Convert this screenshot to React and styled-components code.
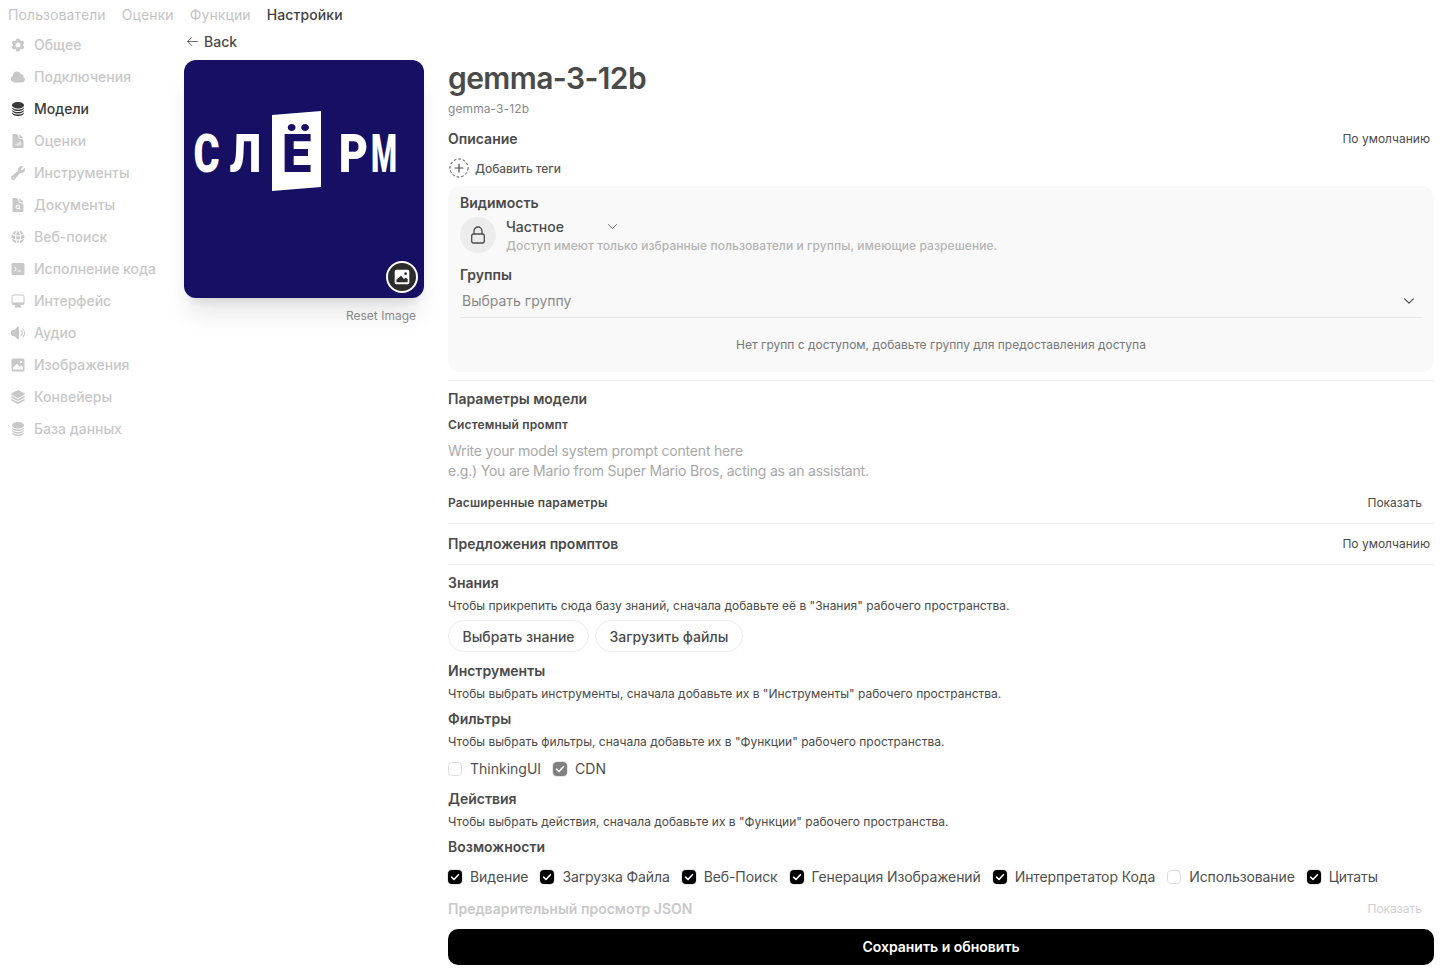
import React from 'react';
import styled, {createGlobalStyle} from 'styled-components';
import {
    HiCog6Tooth, HiCloud, HiCircleStack, HiDocumentChartBar, HiWrench, HiDocumentMagnifyingGlass,
    HiGlobeAlt, HiComputerDesktop, HiSpeakerWave, HiSquare3Stack3D,
    HiOutlineArrowLeft, HiOutlineChevronDown,
} from 'react-icons/hi2';

const GlobalStyle = createGlobalStyle`
    html, body {
        margin: 0;
        background: #fff;
    }
    body {
        font-family: Inter, "Noto Sans", sans-serif;
        color: #4a4a4a;
        -webkit-font-smoothing: antialiased;
    }
    * {
        box-sizing: border-box;
    }
`;

const Page = styled.div`
    width: 1452px;
    height: 976px;
    overflow: hidden;
    padding: 0 18px 0 8px;
`;

const Tabs = styled.nav`
    display: flex;
    gap: 16px;
    height: 29px;
    padding-bottom: 1px;
    align-items: center;
    font-size: 14px;
    letter-spacing: 0.1px;
`;

const Tab = styled.span`
    color: ${p => p.$active ? '#3f3f3f' : '#c4c4c4'};
    font-weight: ${p => p.$active ? 500 : 400};
`;

const Body = styled.div`
    display: flex;
`;

const Sidebar = styled.aside`
    width: 176px;
    flex: none;
`;

const SideItem = styled.div`
    display: flex;
    align-items: center;
    gap: 8px;
    height: 32px;
    padding: 0 0 1px 2px;
    font-size: 14px;
    font-weight: 500;
    color: ${p => p.$active ? '#3a3a3a' : '#c8c8c8'};
    & svg {
        width: 16px;
        height: 16px;
    }
`;

const Main = styled.main`
    flex: 1;
    min-width: 0;
`;

const BackLink = styled.div`
    display: flex;
    align-items: center;
    gap: 5px;
    height: 24px;
    padding-left: 2px;
    font-size: 14px;
    font-weight: 500;
    color: #4a4a4a;
    & svg {
        width: 13px;
        height: 13px;
    }
`;

const Columns = styled.div`
    display: flex;
    gap: 24px;
    margin-top: 7px;
`;

const LeftCol = styled.div`
    width: 240px;
    flex: none;
`;

const Avatar = styled.div`
    position: relative;
    width: 240px;
    height: 238px;
    border-radius: 12px;
    background: #170f63;
    box-shadow: 0 20px 25px -5px rgba(0, 0, 0, 0.1), 0 8px 10px -6px rgba(0, 0, 0, 0.1);
    padding: 51px 0 0 10px;
`;

const Logo = styled.div`
    display: flex;
    align-items: flex-start;
    height: 80px;
`;

const Letter = styled.span`
    display: flex;
    justify-content: center;
    width: ${p => p.$w}px;
    margin-right: ${p => p.$mr || 0}px;
    font-family: Roboto, sans-serif;
    font-weight: 900;
    font-size: 53px;
    line-height: 86px;
    color: ${p => p.$dark ? '#170f63' : '#fff'};
    transform: scaleX(${p => p.$sx || 0.75});
`;

const Door = styled.span`
    display: flex;
    justify-content: center;
    width: 49px;
    height: 80px;
    margin-right: 20px;
    background: #fff;
    clip-path: polygon(0 5%, 100% 0, 100% 95%, 0 100%);
`;

const AvatarButton = styled.div`
    position: absolute;
    right: 6px;
    bottom: 5px;
    width: 32px;
    height: 32px;
    border-radius: 50%;
    border: 2px solid #fff;
    background: #2c2c2c;
    display: flex;
    align-items: center;
    justify-content: center;
    color: #fff;
`;

const ResetLink = styled.div`
    margin-top: 10px;
    padding-right: 8px;
    text-align: right;
    font-size: 12px;
    line-height: 16px;
    color: #8f8f8f;
`;

const RightCol = styled.div`
    flex: 1;
    min-width: 0;
`;

const Title = styled.h1`
    margin: 0;
    font-size: 30px;
    line-height: 36px;
    font-weight: 600;
    letter-spacing: -0.6px;
    color: #4a4a4a;
`;

const SubTitle = styled.div`
    margin-top: 3px;
    font-size: 12px;
    line-height: 20px;
    letter-spacing: 0.1px;
    color: #8a8a8a;
`;

const Row = styled.div`
    display: flex;
    align-items: center;
    justify-content: space-between;
    margin-top: ${p => p.$mt || 0}px;
    height: 20px;
`;

const Heading = styled.div`
    font-size: 14px;
    line-height: 20px;
    font-weight: 600;
    color: ${p => p.$dim ? '#c9c9c9' : '#4a4a4a'};
    margin-top: ${p => p.$mt || 0}px;
`;

const SmallHeading = styled.div`
    font-size: 12px;
    line-height: 16px;
    font-weight: 600;
    letter-spacing: 0.16px;
    color: #4a4a4a;
    margin-top: ${p => p.$mt || 0}px;
`;

const SideNote = styled.span`
    font-size: 12px;
    padding-bottom: 1px;
    color: ${p => p.$dim ? '#cfcfcf' : '#4a4a4a'};
    padding-right: ${p => p.$pr || 4}px;
`;

const TagRow = styled.div`
    display: flex;
    align-items: center;
    gap: 6px;
    height: 20px;
    margin-top: 9px;
    padding-left: 1px;
    font-size: 12px;
    font-weight: 500;
    letter-spacing: -0.05px;
    color: #5a5a5a;
`;

const Panel = styled.section`
    margin-top: 8px;
    height: 186px;
    padding: 7px 12px 0;
    border-radius: 12px;
    background: #f9f9f9;
`;

const VisibilityRow = styled.div`
    display: flex;
    gap: 10px;
    margin-top: 4px;
`;

const LockCircle = styled.div`
    width: 36px;
    height: 36px;
    border-radius: 50%;
    background: #ececec;
    display: flex;
    align-items: center;
    justify-content: center;
    color: #4a4a4a;
`;

const VisibilityText = styled.div`
    display: flex;
    flex-direction: column;
    gap: 2px;
    margin-top: -1px;
`;

const SelectLabel = styled.div`
    display: flex;
    align-items: center;
    gap: 42px;
    height: 20px;
    font-size: 14px;
    font-weight: 500;
    color: #4a4a4a;
    & svg {
        width: 13px;
        height: 13px;
    }
`;

const Hint = styled.div`
    font-size: 12px;
    line-height: 16px;
    font-weight: 500;
    letter-spacing: 0.07px;
    color: #b4b4b4;
`;

const GroupSelect = styled.div`
    display: flex;
    align-items: center;
    justify-content: space-between;
    height: 32px;
    margin-top: 1px;
    padding: 0 6px 2px 2px;
    border-bottom: 1px solid #e8e8e8;
    font-size: 14px;
    color: #8a8a8a;
    & svg {
        width: 14px;
        height: 14px;
        color: #4a4a4a;
        stroke-width: 2;
    }
`;

const EmptyGroups = styled.div`
    margin-top: 19px;
    text-align: center;
    font-size: 12px;
    line-height: 16px;
    color: #777;
`;

const Divider = styled.hr`
    margin: ${p => p.$top}px 0 0;
    border: 0;
    border-top: 1px solid #ececec;
`;

const Placeholder = styled.div`
    margin-top: 8px;
    font-size: 14px;
    line-height: 20px;
    letter-spacing: -0.2px;
    color: #a8a8a8;
`;

const Description = styled.div`
    margin-top: 3px;
    font-size: 12px;
    line-height: 20px;
    color: #4a4a4a;
`;

const ButtonRow = styled.div`
    display: flex;
    gap: 6px;
    margin-top: 4px;
`;

const OutlineButton = styled.div`
    height: 32px;
    padding: 0 13.5px;
    display: flex;
    align-items: center;
    border: 1px solid #ececec;
    border-radius: 16px;
    font-size: 14px;
    font-weight: 500;
    color: #4a4a4a;
`;

const CheckRow = styled.div`
    display: flex;
    align-items: center;
    gap: 12px;
    height: 20px;
    margin-top: ${p => p.$mt || 0}px;
    letter-spacing: ${p => p.$tight ? '-0.1px' : '0'};
`;

const CheckItem = styled.label`
    display: flex;
    align-items: center;
    gap: 8px;
    font-size: 14px;
    line-height: 20px;
    color: #4f4f4f;
`;

const Box = styled.span`
    width: 14px;
    height: 14px;
    border-radius: 4px;
    flex: none;
    display: flex;
    align-items: center;
    justify-content: center;
    border: 1px solid ${p => p.$checked ? 'transparent' : '#dedede'};
    background: ${p => !p.$checked ? '#fff' : p.$muted ? '#808080' : '#000'};
    box-shadow: 0 0 0 1px ${p => p.$checked ? '#e8e8e8' : 'transparent'};
`;

const SaveButton = styled.div`
    height: 36px;
    margin-top: 10px;
    padding-bottom: 1px;
    border-radius: 10px;
    background: #000;
    color: #fff;
    display: flex;
    align-items: center;
    justify-content: center;
    font-size: 14px;
    font-weight: 600;
`;

// square picture icon, the hi2 one is too wide
const ImageIcon = ({size = 16}) => (
    <svg width={size} height={size} viewBox="0 0 16 16" fill="currentColor">
        <path fillRule="evenodd" d="M3 1.5h10A1.5 1.5 0 0 1 14.5 3v10a1.5 1.5 0 0 1-1.5 1.5H3A1.5 1.5 0 0 1 1.5 13V3A1.5 1.5 0 0 1 3 1.5Zm8.2 2.3a1.2 1.2 0 1 0 0 2.4 1.2 1.2 0 0 0 0-2.4ZM3 12.6h10V9.8l-1.6-1.2-1.7 1.2-2.6-3L3 10.4v2.2Z" />
    </svg>
);

const CodeIcon = () => (
    <svg viewBox="0 0 16 16" fill="currentColor">
        <path fillRule="evenodd" d="M3 2h10a1.5 1.5 0 0 1 1.5 1.5v9A1.5 1.5 0 0 1 13 14H3a1.5 1.5 0 0 1-1.5-1.5v-9A1.5 1.5 0 0 1 3 2Zm1 4.2 2 1.8-2 1.8.7.7L6.9 8 4.7 5.5 4 6.2Zm3.5 3.3v1H11v-1H7.5Z" />
    </svg>
);

const sideItems = [
    {icon: HiCog6Tooth, label: 'Общее'},
    {icon: HiCloud, label: 'Подключения'},
    {icon: HiCircleStack, label: 'Модели', active: true},
    {icon: HiDocumentChartBar, label: 'Оценки'},
    {icon: HiWrench, label: 'Инструменты'},
    {icon: HiDocumentMagnifyingGlass, label: 'Документы'},
    {icon: HiGlobeAlt, label: 'Веб-поиск'},
    {icon: CodeIcon, label: 'Исполнение кода'},
    {icon: HiComputerDesktop, label: 'Интерфейс'},
    {icon: HiSpeakerWave, label: 'Аудио'},
    {icon: ImageIcon, label: 'Изображения'},
    {icon: HiSquare3Stack3D, label: 'Конвейеры'},
    {icon: HiCircleStack, label: 'База данных'},
];

const features = [
    {label: 'Видение', checked: true},
    {label: 'Загрузка Файла', checked: true},
    {label: 'Веб-Поиск', checked: true},
    {label: 'Генерация Изображений', checked: true},
    {label: 'Интерпретатор Кода', checked: true},
    {label: 'Использование', checked: false},
    {label: 'Цитаты', checked: true},
];

const Check = ({label, checked, muted}) => (
    <CheckItem>
        <Box $checked={checked} $muted={muted}>
            {checked && (
                <svg width="10" height="10" viewBox="0 0 10 10" fill="none">
                    <path d="M1.6 5.2 L4 7.5 L8.4 2.7" stroke="#fff" strokeWidth="1.6" strokeLinecap="round" strokeLinejoin="round" />
                </svg>
            )}
        </Box>
        {label}
    </CheckItem>
);

const AddTagIcon = () => (
    <svg width="20" height="20" viewBox="0 0 20 20" fill="none" stroke="#4a4a4a">
        <circle cx="10" cy="10" r="9" strokeWidth="1" strokeDasharray="2.6 2" />
        <path d="M10 6v8M6 10h8" strokeWidth="1.2" strokeLinecap="round" />
    </svg>
);

const LockIcon = () => (
    <svg width="16" height="18" viewBox="0 0 16 18" fill="none" stroke="currentColor" strokeWidth="1.3">
        <rect x="1.7" y="8" width="12.6" height="9" rx="2" />
        <path d="M4 8V5a4 4 0 0 1 8 0v3" />
    </svg>
);

const App = () => {
    return (
        <Page>
            <GlobalStyle />
            <Tabs>
                <Tab>Пользователи</Tab>
                <Tab>Оценки</Tab>
                <Tab>Функции</Tab>
                <Tab $active>Настройки</Tab>
            </Tabs>
            <Body>
                <Sidebar>
                    {sideItems.map(({icon: Icon, label, active}, i) => (
                        <SideItem key={i} $active={active}>
                            <Icon />
                            {label}
                        </SideItem>
                    ))}
                </Sidebar>
                <Main>
                    <BackLink>
                        <HiOutlineArrowLeft />
                        Back
                    </BackLink>
                    <Columns>
                        <LeftCol>
                            <Avatar>
                                <Logo>
                                    <Letter $w={25} $mr={12}>С</Letter>
                                    <Letter $w={29} $mr={12} $sx={0.85}>Л</Letter>
                                    <Door>
                                        <Letter $w={25} $dark $sx={1}>Ё</Letter>
                                    </Door>
                                    <Letter $w={25} $mr={5} $sx={0.85}>Р</Letter>
                                    <Letter $w={26} $sx={0.56}>М</Letter>
                                </Logo>
                                <AvatarButton>
                                    <ImageIcon size={18} />
                                </AvatarButton>
                            </Avatar>
                            <ResetLink>Reset Image</ResetLink>
                        </LeftCol>
                        <RightCol>
                            <Title>gemma-3-12b</Title>
                            <SubTitle>gemma-3-12b</SubTitle>
                            <Row $mt={10}>
                                <Heading>Описание</Heading>
                                <SideNote>По умолчанию</SideNote>
                            </Row>
                            <TagRow>
                                <AddTagIcon />
                                Добавить теги
                            </TagRow>
                            <Panel>
                                <Heading>Видимость</Heading>
                                <VisibilityRow>
                                    <LockCircle><LockIcon /></LockCircle>
                                    <VisibilityText>
                                        <SelectLabel>
                                            Частное
                                            <HiOutlineChevronDown />
                                        </SelectLabel>
                                        <Hint>Доступ имеют только избранные пользователи и группы, имеющие разрешение.</Hint>
                                    </VisibilityText>
                                </VisibilityRow>
                                <Heading $mt={11}>Группы</Heading>
                                <GroupSelect>
                                    Выбрать группу
                                    <HiOutlineChevronDown />
                                </GroupSelect>
                                <EmptyGroups>Нет групп с доступом, добавьте группу для предоставления доступа</EmptyGroups>
                            </Panel>
                            <Divider $top={8} />
                            <Heading $mt={8}>Параметры модели</Heading>
                            <SmallHeading $mt={8}>Системный промпт</SmallHeading>
                            <Placeholder>
                                Write your model system prompt content here
                                <br />
                                e.g.) You are Mario from Super Mario Bros, acting as an assistant.
                            </Placeholder>
                            <Row $mt={12}>
                                <SmallHeading>Расширенные параметры</SmallHeading>
                                <SideNote $pr={12}>Показать</SideNote>
                            </Row>
                            <Divider $top={10} />
                            <Row $mt={10}>
                                <Heading>Предложения промптов</Heading>
                                <SideNote>По умолчанию</SideNote>
                            </Row>
                            <Divider $top={10} />
                            <Heading $mt={8}>Знания</Heading>
                            <Description>Чтобы прикрепить сюда базу знаний, сначала добавьте её в "Знания" рабочего пространства.</Description>
                            <ButtonRow>
                                <OutlineButton>Выбрать знание</OutlineButton>
                                <OutlineButton>Загрузить файлы</OutlineButton>
                            </ButtonRow>
                            <Heading $mt={9}>Инструменты</Heading>
                            <Description>Чтобы выбрать инструменты, сначала добавьте их в "Инструменты" рабочего пространства.</Description>
                            <Heading $mt={5}>Фильтры</Heading>
                            <Description>Чтобы выбрать фильтры, сначала добавьте их в "Функции" рабочего пространства.</Description>
                            <CheckRow $mt={7}>
                                <Check label="ThinkingUI" />
                                <Check label="CDN" checked muted />
                            </CheckRow>
                            <Heading $mt={10}>Действия</Heading>
                            <Description>Чтобы выбрать действия, сначала добавьте их в "Функции" рабочего пространства.</Description>
                            <Heading $mt={5}>Возможности</Heading>
                            <CheckRow $mt={10} $tight>
                                {features.map(({label, checked}, i) => (
                                    <Check key={i} label={label} checked={checked} />
                                ))}
                            </CheckRow>
                            <Row $mt={12}>
                                <Heading $dim>Предварительный просмотр JSON</Heading>
                                <SideNote $dim $pr={12}>Показать</SideNote>
                            </Row>
                            <SaveButton>Сохранить и обновить</SaveButton>
                        </RightCol>
                    </Columns>
                </Main>
            </Body>
        </Page>
    );
};

export default App;
